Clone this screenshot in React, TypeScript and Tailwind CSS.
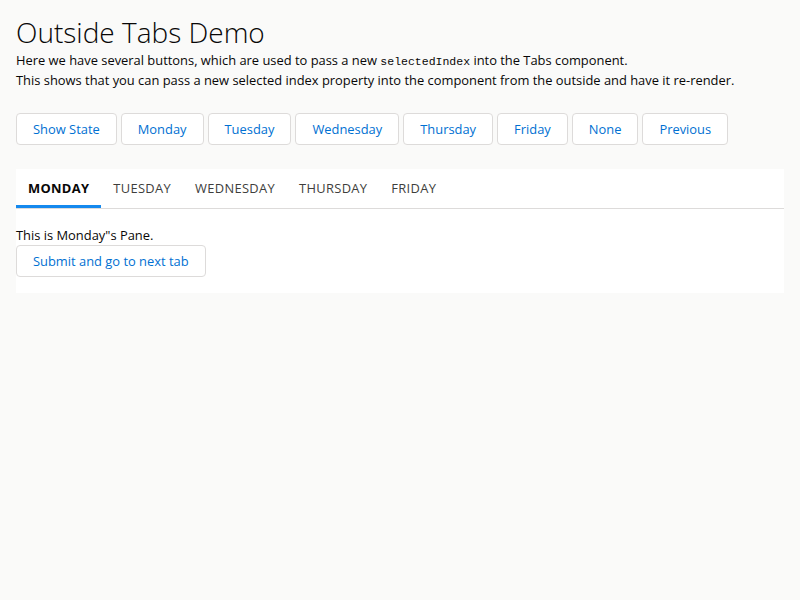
import { useState } from 'react';

const days = ['Monday', 'Tuesday', 'Wednesday', 'Thursday', 'Friday'];

function Btn({ children, onClick }: { children: React.ReactNode; onClick?: () => void }) {
  return (
    <button
      onClick={onClick}
      className="h-8 rounded border border-[#dddbda] bg-white px-4 text-[12.9px] leading-[30px] text-[#0070d2] hover:bg-[#f4f6f9]"
    >
      {children}
    </button>
  );
}

export default function App() {
  const [selected, setSelected] = useState(0);

  return (
    <div className="min-h-[600px] bg-[#fafaf9] px-4 pt-[15px] font-['Open_Sans',sans-serif] text-[12.9px] leading-5 text-[#080707]">
      <h1 className="text-[28px] font-light leading-[35px]">Outside Tabs Demo</h1>
      <p>
        Here we have several buttons, which are used to pass a new{' '}
        <code className="font-['Liberation_Mono',monospace] text-[11.5px] leading-none">selectedIndex</code> into
        the Tabs component.
      </p>
      <p>This shows that you can pass a new selected index property into the component from the outside and have it re-render.</p>

      <div className="mt-[23px] flex gap-1">
        <Btn>Show State</Btn>
        {days.map((d, i) => (
          <Btn key={d} onClick={() => setSelected(i)}>
            {d}
          </Btn>
        ))}
        <Btn onClick={() => setSelected(-1)}>None</Btn>
        <Btn onClick={() => setSelected(Math.max(0, selected - 1))}>Previous</Btn>
      </div>

      <div className="mt-6 bg-white pb-4">
        <ul className="flex border-b border-[#dddbda]">
          {days.map((d, i) => (
            <li
              key={d}
              onClick={() => setSelected(i)}
              className={
                i === selected
                  ? 'cursor-pointer border-b-[3px] border-[#1589ee] px-3 pb-[7px] pt-[9px] font-bold uppercase tracking-[0.025em] text-[#080707]'
                  : 'cursor-pointer border-b-[3px] border-transparent px-3 pb-[7px] pt-[9px] uppercase tracking-[0.025em] text-[#3e3e3c]'
              }
            >
              {d}
            </li>
          ))}
        </ul>
        <div className="pt-4">
          {selected >= 0 && (
            <>
              <p>This is {days[selected]}"s Pane.</p>
              <Btn onClick={() => setSelected(Math.min(4, selected + 1))}>Submit and go to next tab</Btn>
            </>
          )}
        </div>
      </div>
    </div>
  );
}
